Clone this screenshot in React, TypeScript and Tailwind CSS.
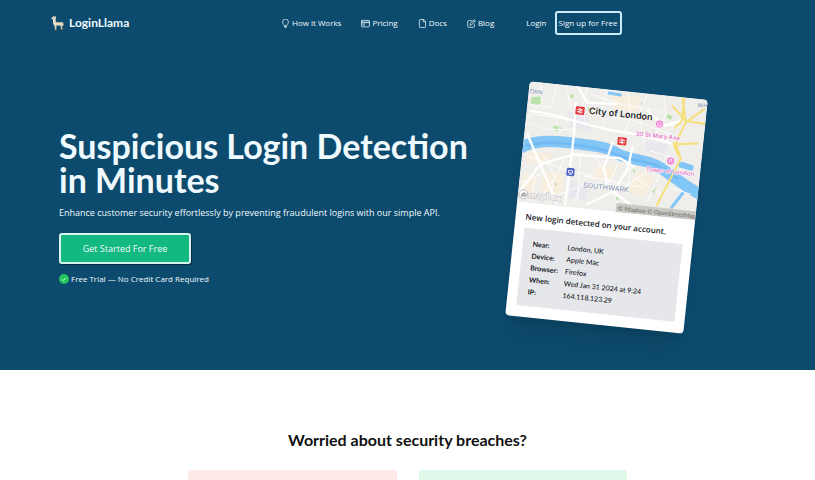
import type { ReactNode } from "react";

type NavItem = { label: string; href: string; icon: ReactNode };

const iconProps = {
  viewBox: "0 0 16 16",
  fill: "none",
  stroke: "currentColor",
  strokeWidth: 1.3,
  strokeLinecap: "round" as const,
  strokeLinejoin: "round" as const,
  className: "h-[9px] w-[9px] shrink-0",
  "aria-hidden": true,
};

const NAV: NavItem[] = [
  {
    label: "How it Works",
    href: "#how",
    icon: (
      <svg {...iconProps}>
        <path d="M6 11.5C6 9.6 2.8 8.9 2.8 5.4a5.2 5.2 0 0 1 10.4 0c0 3.5-3.2 4.2-3.2 6.1zM6 13.5h4M7 15.4h2" />
      </svg>
    ),
  },
  {
    label: "Pricing",
    href: "#pricing",
    icon: (
      <svg {...iconProps}>
        <rect x="1" y="2.5" width="14" height="11.5" rx="1" />
        <path d="M1 5.5h14M1 6.5h14M3.5 9h3M3.5 11.2h2" />
      </svg>
    ),
  },
  {
    label: "Docs",
    href: "#docs",
    icon: (
      <svg {...iconProps}>
        <path d="M9.5 1H3.8A1.3 1.3 0 0 0 2.5 2.3v11.4A1.3 1.3 0 0 0 3.8 15h8.4a1.3 1.3 0 0 0 1.3-1.3V5zM9.5 1v4h4" />
      </svg>
    ),
  },
  {
    label: "Blog",
    href: "#blog",
    icon: (
      <svg {...iconProps}>
        <path d="M8 3H2.5A1.3 1.3 0 0 0 1.2 4.3v9.2a1.3 1.3 0 0 0 1.3 1.3h9.2a1.3 1.3 0 0 0 1.3-1.3V9M5.5 10.6l.6-2.9 6.7-6.5 2.2 2.2-6.7 6.5zM11 3l2.2 2.2" />
      </svg>
    ),
  },
];

const DETAILS = [
  { label: "Near:", value: "London, UK" },
  { label: "Device:", value: "Apple Mac" },
  { label: "Browser:", value: "Firefox" },
  { label: "When:", value: "Wed Jan 31 2024 at 9:24" },
  { label: "IP:", value: "164.118.123.29" },
];

export default function App() {
  return (
    <div className="min-h-screen overflow-x-hidden bg-white font-['Lato','Open_Sans',sans-serif]">
      <div className="bg-[#0d4b6e] text-[#effaff]">
        <Header />
        <Hero />
      </div>
      <Breaches />
    </div>
  );
}

function Header() {
  return (
    <header className="flex h-[46px] items-center pl-[51px] font-['Open_Sans',sans-serif] text-[8px] font-medium">
      <a
        href="#home"
        className="flex w-[230px] items-center gap-1 font-['Lato',sans-serif] text-[12px] font-bold"
      >
        <Llama />
        LoginLlama
      </a>
      <nav className="flex items-center gap-5">
        {NAV.map((item) => (
          <a key={item.label} href={item.href} className="flex items-center gap-[2px] whitespace-nowrap">
            {item.icon}
            {item.label}
          </a>
        ))}
      </nav>
      <a href="#login" className="ml-8">
        Login
      </a>
      <button
        type="button"
        className="ml-2 flex h-6 w-[67px] items-center justify-center whitespace-nowrap rounded-[3px] border-2 border-[#c8ecfa]"
      >
        Sign up for Free
      </button>
    </header>
  );
}

function Llama() {
  return (
    <svg viewBox="0 0 28 32" className="h-4 w-[14px]" aria-hidden="true">
      <path
        d="M4 3l2-2 1 3 2-2 1 3-1 4 1 5h11c3 0 4 2 4 5l-1 4-2-2v8h-2l-1-8H11l-1 9H8l-1-9c-3-2-3-5-3-9V9L1 8V6z"
        fill="#e6dfc9"
      />
      <path d="M9 14c5 3 10-1 14 2M10 23v8M21 22l2 7" fill="none" stroke="#a79a76" strokeWidth="1.6" />
      <path d="M5 5h1M7 31h3M21 30h3" stroke="#4c4638" strokeWidth="1.6" />
    </svg>
  );
}

function Hero() {
  return (
    <section className="flex items-center justify-between pb-[45px] pl-[59px] pr-[119px] pt-11">
      <div>
        <h1 className="whitespace-nowrap text-[34px] font-bold leading-[34px]">
          Suspicious Login Detection
          <br />
          in Minutes
        </h1>
        <p className="mt-2 whitespace-nowrap font-['Open_Sans',sans-serif] text-[9px] font-medium leading-4">
          Enhance customer security effortlessly by preventing fraudulent logins with our simple API.
        </p>
        <button
          type="button"
          className="mt-3 flex h-[31px] w-[132px] items-center justify-center rounded-[3px] border-2 border-[#d5f5ee] bg-[#13b981] font-['Open_Sans',sans-serif] text-[9px] font-medium shadow-[1px_1px_1px_#062b42]"
        >
          Get Started For Free
        </button>
        <p className="mt-2 flex items-center gap-[2px] font-['Open_Sans',sans-serif] text-[8px] font-medium leading-[14px]">
          <svg viewBox="0 0 20 20" className="h-[10px] w-[10px]" aria-hidden="true">
            <circle cx="10" cy="10" r="10" fill="#22c55e" />
            <path d="M6 10.5l3 2.7 5-6" fill="none" stroke="#dfffe9" strokeWidth="1.8" />
          </svg>
          Free Trial — No Credit Card Required
        </p>
      </div>
      <LoginCard />
    </section>
  );
}

function LoginCard() {
  return (
    <article className="w-[179px] shrink-0 rotate-6 overflow-hidden rounded-[4px] bg-white text-[#15171c] shadow-xl">
      <LondonMap />
      <div className="px-[10px] pb-[11px] pt-2">
        <h2 className="whitespace-nowrap font-['Open_Sans',sans-serif] text-[8px] font-semibold leading-3">
          New login detected on your account.
        </h2>
        <div className="mt-[5px] bg-[#e5e7eb] px-[10px] py-[9px]">
          <table className="text-left text-[7px] leading-3">
            <tbody>
              {DETAILS.map((row) => (
                <tr key={row.label}>
                  <th scope="row" className="w-[35px] p-0 font-bold">
                    {row.label}
                  </th>
                  <td className="whitespace-nowrap p-0 font-medium">{row.value}</td>
                </tr>
              ))}
            </tbody>
          </table>
        </div>
      </div>
    </article>
  );
}

function LondonMap() {
  return (
    <svg viewBox="0 0 179 121" className="block w-full" role="img" aria-label="Map of London">
      <rect width="179" height="121" fill="#f0eeea" />
      {/* streets and water are drawn north-up, turned back against the card */}
      <g transform="rotate(-6) translate(-29 -7) scale(.3333)" fill="none" strokeLinecap="round" strokeLinejoin="round">
        <g fill="#f8eedd">
          <path d="M90 230l70 10-40 30-50-10zM130 290l60 10-10 60-60-10zM330 60l90 10-10 40-70-5zM290 270l60 10-20 40-50-10zM70 300l40 10-20 60h-40zM410 290l50 20-30 60-50-20z" />
        </g>
        <g fill="#ebe7ee">
          <path d="M200 110l60 10 10 50-60-10zM440 200l60 10-10 40-60-20zM210 320l60 10-20 50-50-10z" />
        </g>
        <g fill="#b9e3a8">
          <path d="M92 70l27-4 1 24-30 2zM155 158l17-6 12 11-17 8zM262 100l15 3-5 11-12-5zM210 60l10 2-3 10-9-3zM500 120l16 5-6 12-13-7zM455 340l12 5-7 12-9-6zM365 120l10 4-6 8zM160 325l9 3-5 8zM345 368l11 4-8 9zM395 285l10 4-7 8zM420 85l7 2-4 7zM205 255l8 1-3 9z" />
        </g>
        <g stroke="#82c5f7">
          <path strokeWidth="34" d="M62 220c30-22 95-22 150-14 60 7 105 10 145 36 35 16 75 12 115 34 50 30 65 55 155 100" />
          <path strokeWidth="18" d="M542 272l28 8" />
          <path strokeWidth="9" d="M325 56l34 6M548 354l-35 45" />
        </g>
        <path stroke="#72b9f1" strokeWidth="8" d="M80 214c60-16 120-6 170 2 50 4 85 20 130 37 60 10 110 20 150 60" />
        <g stroke="#fcfcfc" strokeWidth="3">
          <path d="M120 25l5 60-45 45M170 30l-20 70-65-10M195 35l15 60-45 40 15 40M260 40l-15 55 10 60M320 48l-20 65 15 60M380 55l10 65-20 65M440 60l-25 60 15 90M490 65l5 55-35 70M100 120l70 10 90 20M270 60l90 30 120 20M90 145l40 20 90 0M330 130l60 5 120 45M480 145l55 15M80 245l110 40 80 20M130 245l30 60-10 75M190 250l-20 50-50 70M240 240l-10 140M280 240l40 70 30 80M310 260l-60 60-30 60M350 270l-30 75 70 45M390 260l-10 100M440 290l-90 65-70-20M480 290l-40 90M60 325l70-30M90 380l15-70M400 310l80 50M250 305l180 35M510 340l60 20M140 375l100-40M450 230l60 20" />
        </g>
        <g stroke="#fff" strokeWidth="7">
          <path d="M90 110c75 10 130 30 190 46 75 20 150 20 240 55M80 180l38 90 100-30 140 12 40 25M118 270l-60 80M118 270l50 115M225 85l-5 90-12 105-15 110M335 205l-25 75 10 60 75 55M395 220l-15 65-40 65-80 40M230 35l30 50 85 5M440 110l50 45 50-15" />
        </g>
        <g stroke="#f5df78" strokeWidth="6">
          <path d="M545 68l10 75-30 65 15 45-72 140M515 95l40 45 65 10M555 145l55-40M525 210l65-2M550 75l-7 65-20 20M533 243l-15-35" />
        </g>
      </g>
      <g
        className="font-['Inter','Lato',sans-serif]"
        stroke="#fff"
        strokeWidth="1"
        paintOrder="stroke"
        strokeLinejoin="round"
      >
        <text x="62" y="26" fontSize="9" fontWeight="600" fill="#222">
          City of London
        </text>
        <g fill="#e579c8" textAnchor="middle" fontSize="6" fontWeight="600">
          <text x="133" y="43">30 St Mary Axe</text>
          <text x="149" y="77">Tower of London</text>
        </g>
        <g fill="#8c98b0" fontWeight="500">
          <text x="1" y="12" fontSize="6">ORN</text>
          <text x="169" y="8" fontSize="6">WH</text>
          <text x="87" y="100" fontSize="7" textAnchor="middle">SOUTHWARK</text>
        </g>
      </g>
      <StationPin x={53} y={24} />
      <StationPin x={98} y={50} />
      <rect x="46" y="82" width="8" height="8" rx="1.5" fill="#4a62c6" />
      <path d="M48 84.5h4v2.5h-4zM48.5 89l1-1h1l1 1" fill="none" stroke="#fff" strokeWidth=".8" />
      <g fill="#ee83cf" stroke="#fff" strokeWidth=".7">
        <circle cx="133.5" cy="29" r="4" />
        <circle cx="148.5" cy="64.5" r="4" />
      </g>
      <path
        d="M131.8 31v-2.5l1.7-1.3 1.7 1.3V31zM147 66.5l.7-4h1.6l.7 4"
        fill="none"
        stroke="#fff"
        strokeWidth=".8"
      />
      <circle cx="5.5" cy="113" r="4.5" fill="#fff" stroke="#a7a7a7" strokeWidth=".7" />
      <path d="M3 115.5c-.5-3 1.5-5 4-4.5s2.5 4 0 4.5zM6 111.5l.5 1 1 .4-1 .5-.5 1-.5-1-1-.5 1-.4z" fill="#b5b5b5" />
      <text
        x="11"
        y="116"
        fontSize="9"
        fontWeight="700"
        fill="#fff"
        stroke="#bbb"
        strokeWidth="1"
        paintOrder="stroke"
        className="font-['Lato',sans-serif]"
      >
        mapbox
      </text>
      <rect x="99" y="112" width="80" height="9" fill="#c5c4c1" fillOpacity=".9" />
      <text x="101" y="119" fontSize="6" fill="#66665f" className="font-['Lato',sans-serif]">
        © Mapbox © OpenStreetMap
      </text>
    </svg>
  );
}

function StationPin({ x, y }: { x: number; y: number }) {
  return (
    <g transform={`translate(${x} ${y})`}>
      <rect x="-4.5" y="-4" width="9" height="8" rx="1" fill="#e5383e" />
      <path d="M-3-1h6M-3 1.2h6M-1.5-2.5l3 1.5-3 2.2 3 1.5" fill="none" stroke="#fff" strokeWidth=".8" />
    </g>
  );
}

function Breaches() {
  return (
    <section className="px-[188px] pt-[60px]">
      <h2 className="text-center text-[16px] font-bold leading-5 text-[#111]">Worried about security breaches?</h2>
      <div className="mt-5 grid grid-cols-2 gap-[22px]">
        <div className="h-[10px] rounded-t-[3px] bg-[#fee8e8]" />
        <div className="h-[10px] rounded-t-[3px] bg-[#def9e9]" />
      </div>
    </section>
  );
}
